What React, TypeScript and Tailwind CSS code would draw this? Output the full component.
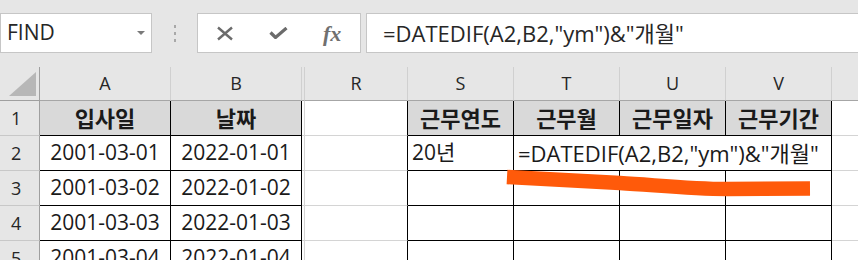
import React from 'react';

const FONT = { fontFamily: '"Open Sans", "Noto Sans CJK KR", sans-serif' };

const cols = ['A', 'B', '', 'R', 'S', 'T', 'U', 'V', ''];

const dates = [
  ['2001-03-01', '2022-01-01'],
  ['2001-03-02', '2022-01-02'],
  ['2001-03-03', '2022-01-03'],
  ['2001-03-04', '2022-01-04'],
];

const TopBar: React.FC = () => (
  <div className="flex h-[67px] items-start bg-[#e6e6e6] pt-[13px]">
    <div className="relative flex h-[40px] w-[152px] items-center border border-[#c6c6c6] bg-white pl-[6px]">
      <span className="text-[21px] text-[#262626]">FIND</span>
      <span className="absolute left-[136px] top-[17px] h-0 w-0 border-x-[4px] border-t-[4px] border-x-transparent border-t-[#7a7a7a]" />
    </div>
    <div className="flex w-[45px] flex-col items-center gap-[4px] pt-[12px]">
      <span className="h-[3px] w-[2px] bg-[#a8a8a8]" />
      <span className="h-[3px] w-[2px] bg-[#a8a8a8]" />
      <span className="h-[3px] w-[2px] bg-[#a8a8a8]" />
    </div>
    <div className="flex h-[40px] w-[164px] items-center border border-[#c6c6c6] bg-white">
      <svg width="18" height="15" viewBox="0 0 18 15" className="ml-[18px]">
        <path d="M2 1.5 L16 13.5 M16 1.5 L2 13.5" stroke="#6b6b6b" strokeWidth="2.4" fill="none" />
      </svg>
      <svg width="19" height="12" viewBox="0 0 19 12" className="ml-[35px]">
        <path d="M1.5 5.5 L6.5 10.5 L17.5 1" stroke="#6b6b6b" strokeWidth="3.2" fill="none" />
      </svg>
      <span
        className="ml-[35px] text-[22px] font-bold italic text-[#707070]"
        style={{ fontFamily: '"Liberation Serif", "DejaVu Serif", serif' }}
      >
        fx
      </span>
    </div>
    <div className="ml-[5px] flex h-[40px] flex-1 items-center border-y border-l border-[#c6c6c6] bg-white pl-[16px]">
      <span className="text-[22px] text-[#262626]">=DATEDIF(A2,B2,"ym")&amp;"개월"</span>
    </div>
  </div>
);

const Sheet: React.FC = () => {
  const black = 'border-black';
  return (
    <div className="relative grid grid-cols-[40px_131px_131px_3px_103px_106px_106px_106px_106px_1fr] grid-rows-[34px_35px_35px_35px_35px_35px]">
      {/* column headers */}
      <div className="relative border-b border-r border-[#9f9f9f] bg-[#e6e6e6]">
        <span className="absolute bottom-[4px] right-[3px] h-0 w-0 border-b-[24px] border-l-[27px] border-b-[#b7b7b7] border-l-transparent" />
      </div>
      {cols.map((c, i) => (
        <div
          key={'h' + i}
          className={`flex items-center justify-center border-b border-[#a6a6a6] bg-[#e6e6e6] text-[18px] text-[#262626] ${
            i < cols.length - 1 ? 'border-r border-r-[#d0d0d0]' : ''
          }`}
        >
          {c}
        </div>
      ))}

      {/* row 1 */}
      <div className="flex items-center border-b border-r border-b-[#c8c8c8] border-r-[#9f9f9f] bg-[#e6e6e6] pl-[11px] text-[18px] text-[#262626]">1</div>
      <div className={`flex items-center justify-center border-b border-r ${black} bg-[#d9d9d9] text-[22px] font-bold text-[#1a1a1a]`}>입사일</div>
      <div className={`flex items-center justify-center border-b border-r ${black} bg-[#d9d9d9] text-[22px] font-bold text-[#1a1a1a]`}>날짜</div>
      <div className="border-b border-r border-b-[#d4d4d4] border-r-[#d4d4d4]" />
      <div className="border-b border-r border-b-[#d4d4d4] border-r-black" />
      {['근무연도', '근무월', '근무일자', '근무기간'].map((t) => (
        <div key={t} className={`flex items-center justify-center border-b border-r ${black} bg-[#d9d9d9] text-[22px] font-bold text-[#1a1a1a]`}>
          {t}
        </div>
      ))}
      <div className="border-b border-[#d4d4d4]" />

      {/* rows 2-5 */}
      {dates.map(([a, b], r) => (
        <React.Fragment key={a}>
          <div className="flex items-center border-b border-r border-b-[#c8c8c8] border-r-[#9f9f9f] bg-[#e6e6e6] pl-[11px] text-[18px] text-[#262626]">
            {r + 2}
          </div>
          <div className={`flex items-center justify-center border-b border-r ${black} text-[21px] text-[#1a1a1a]`}>{a}</div>
          <div className={`flex items-center justify-center border-b border-r ${black} text-[21px] text-[#1a1a1a]`}>{b}</div>
          <div className="border-b border-r border-b-[#d4d4d4] border-r-[#d4d4d4]" />
          <div className="border-b border-r border-b-[#d4d4d4] border-r-black" />
          {r === 0 ? (
            <>
              <div className={`flex items-center border-b border-r ${black} pl-[4px] text-[21px] text-[#1a1a1a]`}>20년</div>
              <div className={`col-span-3 flex items-center whitespace-nowrap border-b border-r ${black} pl-[4px] text-[22px] text-[#1a1a1a]`}>
                =DATEDIF(A2,B2,"ym")&amp;"개월"
              </div>
            </>
          ) : (
            <>
              <div className={`border-b border-r ${black}`} />
              <div className={`border-b border-r ${black}`} />
              <div className={`border-b border-r ${black}`} />
              <div className={`border-b border-r ${black}`} />
            </>
          )}
          <div className="border-b border-[#d4d4d4]" />
        </React.Fragment>
      ))}

      {/* hand-drawn orange highlight stroke */}
      <svg className="pointer-events-none absolute left-0 top-0" width="858" height="193" viewBox="0 0 858 193">
        <path d="M507 110 L620 116 C655 118 690 122 727 122 L810 121.5" stroke="#ff5a0a" strokeWidth="14.5" fill="none" />
      </svg>
    </div>
  );
};

const App: React.FC = () => {
  return (
    <div className="h-[260px] w-[858px] overflow-hidden bg-white" style={FONT}>
      <TopBar />
      <Sheet />
    </div>
  );
};

export default App;
